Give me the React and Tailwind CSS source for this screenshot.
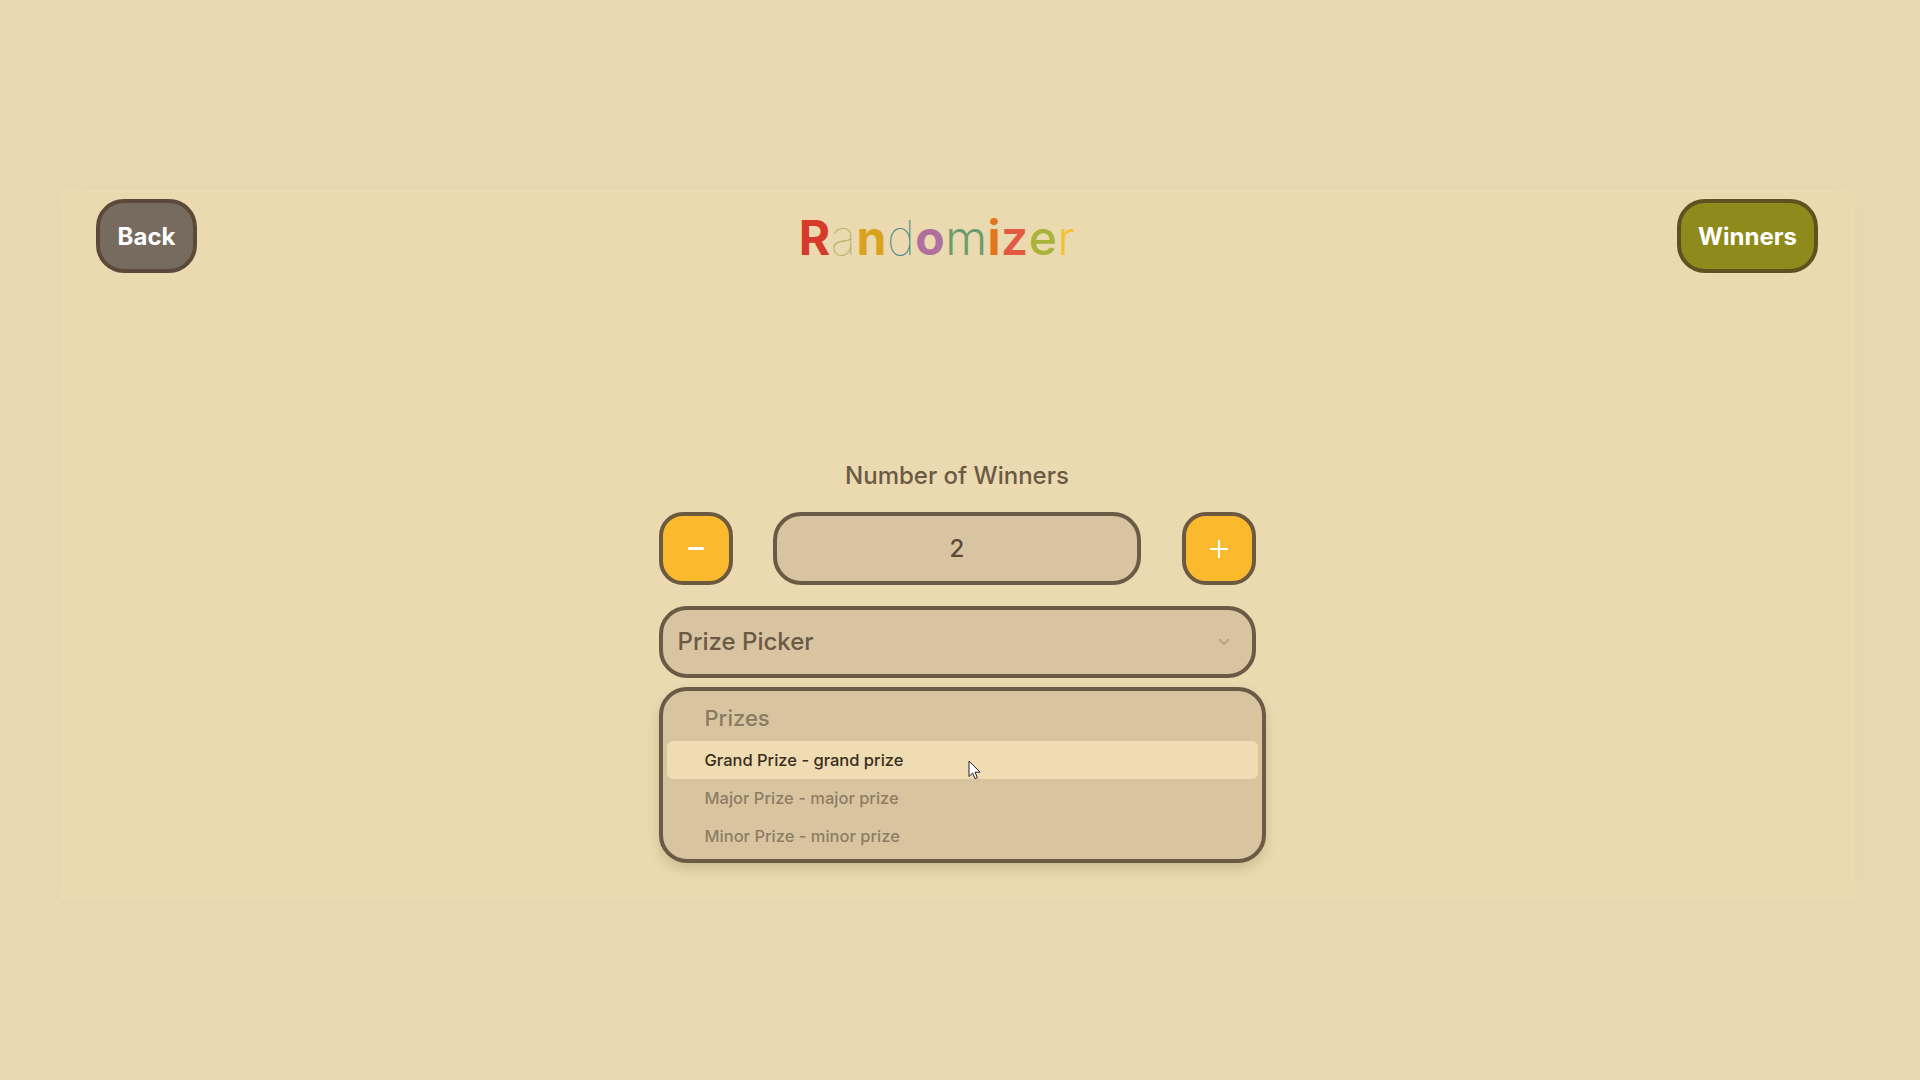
import React from "react";

const letters = [
  { c: "R", cls: "text-[#d63a2a] font-bold" },
  { c: "a", cls: "text-[#b9b46e] font-thin" },
  { c: "n", cls: "text-[#d9a21f] font-bold" },
  { c: "d", cls: "text-[#4f8c8a] font-thin" },
  { c: "o", cls: "text-[#b06f9e] font-bold" },
  { c: "m", cls: "text-[#6f9c6e] font-light" },
  { c: "i", cls: "text-[#e2761f] font-bold" },
  { c: "z", cls: "text-[#e35a42] font-semibold" },
  { c: "e", cls: "text-[#a9b33a] font-medium" },
  { c: "r", cls: "text-[#f2c232] font-light" },
];

export default function App() {
  return (
    <div
      className="min-h-screen w-full bg-[#e9d9b1] pt-[190px] pl-[61px] pr-[65px]"
      style={{ fontFamily: "Inter, 'Noto Sans', 'Liberation Sans', sans-serif" }}
    >
      <div className="h-[710px] w-full bg-[#ebd9af] shadow-[0_0_30px_rgba(120,90,40,0.02)] flex flex-col">
        {/* header */}
        <div className="flex items-center justify-between pt-[9px] pl-[35px] pr-[37px]">
          <button className="w-[101px] h-[74px] rounded-[28px] border-[4px] border-[#5b4a3c] bg-[#776a5f] text-white text-[24px] font-bold flex items-center justify-center pt-[2px]">
            Back
          </button>
          <h1 className="text-[48px] leading-none tracking-[0.01em] flex pt-[4px]">
            {letters.map((l, i) => (
              <span key={i} className={l.cls}>
                {l.c}
              </span>
            ))}
          </h1>
          <button className="w-[141px] h-[74px] rounded-[28px] border-[4px] border-[#5e5220] bg-[#8f8a1c] text-white text-[24px] font-bold flex items-center justify-center pt-[2px]">
            Winners
          </button>
        </div>

        {/* body */}
        <div className="mt-[187px] flex flex-col items-center pr-[2px]">
          <div className="w-[597px] flex flex-col">
            <div className="text-center text-[24px] leading-[32px] font-medium text-[#6b5a45]">
              Number of Winners
            </div>
            <div className="mt-[20px] flex items-center justify-between">
              <button className="w-[74px] h-[73px] rounded-[24px] border-[4px] border-[#6b5a40] bg-[#fbb92e] flex items-center justify-center">
                <span className="block w-[16px] h-[2.5px] bg-white rounded-full"></span>
              </button>
              <div className="w-[368px] h-[73px] rounded-[28px] border-[4px] border-[#6b5a45] bg-[#d8c4a0] flex items-center justify-center text-[24px] font-medium text-[#5a4a3a]">
                2
              </div>
              <button className="w-[74px] h-[73px] rounded-[24px] border-[4px] border-[#6b5a40] bg-[#fbb92e] flex items-center justify-center">
                <svg width="18" height="18" viewBox="0 0 18 18">
                  <path d="M9 1v16M1 9h16" stroke="white" strokeWidth="2.2" strokeLinecap="round" />
                </svg>
              </button>
            </div>

            <div className="mt-[21px] h-[72px] rounded-[28px] border-[4px] border-[#6b5a45] bg-[#d8c4a0] flex items-center justify-between pl-[15px] pr-[22px]">
              <span className="text-[24px] font-medium text-[#6b5a45]">Prize Picker</span>
              <svg width="12" height="8" viewBox="0 0 12 8">
                <path d="M1.5 1.5L6 6l4.5-4.5" fill="none" stroke="#a8977a" strokeWidth="1.3" strokeLinecap="round" strokeLinejoin="round" />
              </svg>
            </div>

            <div className="relative mt-[9px] w-[607px] rounded-[28px] border-[4px] border-[#6b5a45] bg-[#d8c5a0] p-[4px] shadow-[0_6px_12px_rgba(80,60,30,0.18)]">
              <div className="h-[46px] flex items-center pl-[38px] text-[22px] font-medium text-[#8a7a60]">
                Prizes
              </div>
              <div className="h-[38px] flex items-center pl-[38px] rounded-[6px] bg-[#efdcb2] text-[16.5px] font-medium text-[#3a2e20]">
                Grand Prize - grand prize
              </div>
              <div className="h-[38px] flex items-center pl-[38px] text-[16.5px] font-medium text-[#8d7d62]">
                Major Prize - major prize
              </div>
              <div className="h-[38px] flex items-center pl-[38px] text-[16.5px] font-medium text-[#8d7d62]">
                Minor Prize - minor prize
              </div>
              <svg
                className="absolute left-[305px] top-[69px]"
                width="13"
                height="20"
                viewBox="0 0 13 20"
              >
                <path
                  d="M1 1v15.5l3.6-3.4 2.4 5.6 2.4-1-2.4-5.5h5z"
                  fill="white"
                  stroke="#222"
                  strokeWidth="1"
                  strokeLinejoin="round"
                />
              </svg>
            </div>
          </div>
        </div>
      </div>
    </div>
  );
}
